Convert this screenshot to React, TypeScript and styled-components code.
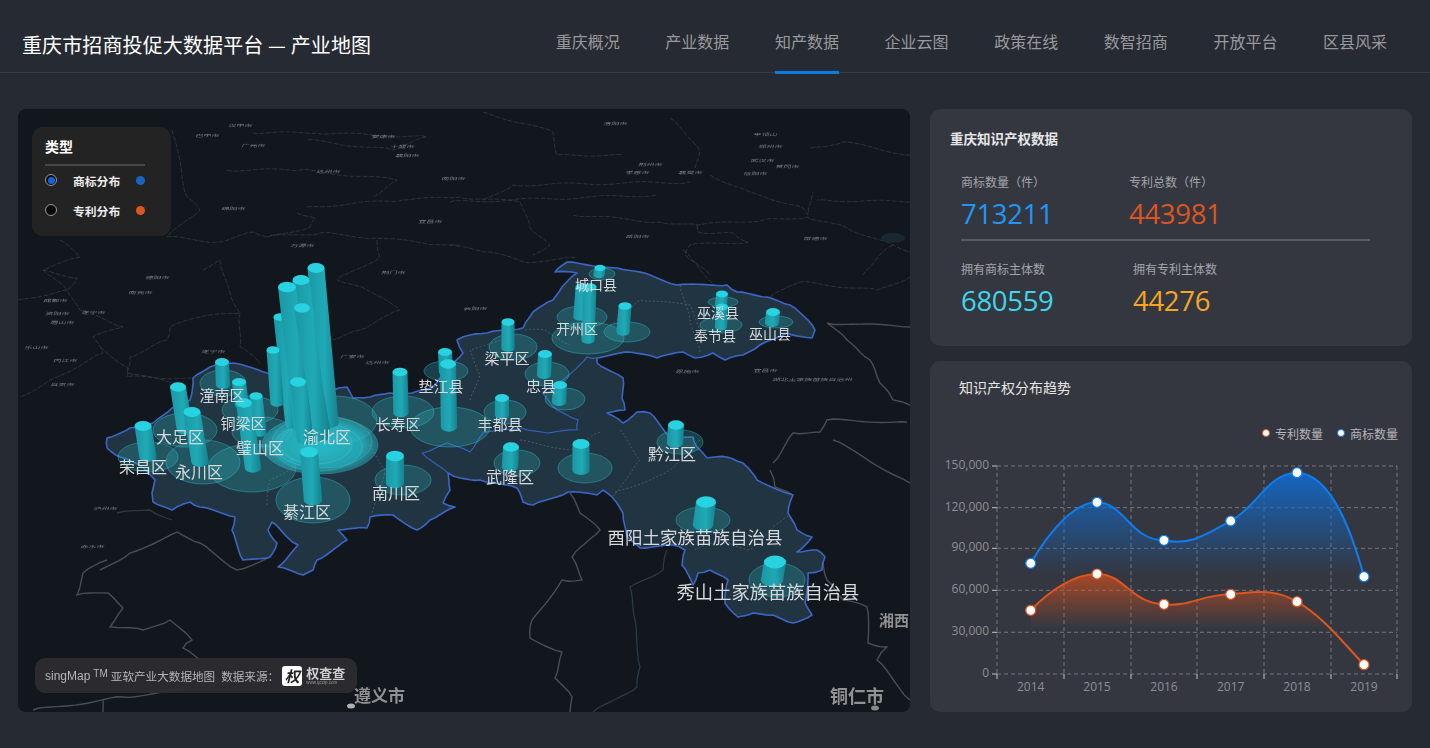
import React from "react";
import styled, { createGlobalStyle } from "styled-components";

const CJK = `"Noto Sans CJK SC", "Noto Sans", sans-serif`;

const GlobalStyle = createGlobalStyle`
  html, body {
    margin: 0;
    padding: 0;
    background: #262a32;
    font-family: ${CJK};
  }
  * { box-sizing: border-box; }
`;

const Page = styled.div`
  width: 1430px;
  height: 748px;
  overflow: hidden;
  background: #262a32;
`;

const Header = styled.header`
  height: 73px;
  padding: 0 3px 0 22px;
  display: flex;
  justify-content: space-between;
  border-bottom: 1px solid #383c46;
`;

const Title = styled.h1`
  margin: 0;
  padding-top: 31px;
  font-size: 20px;
  line-height: 28px;
  font-weight: 400;
  letter-spacing: 0.12px;
  color: #fff;
`;

const Nav = styled.nav`
  display: flex;
  gap: 45.6px;
  padding-right: 40px;
`;

const NavItem = styled.a<{ $active?: boolean }>`
  height: 74px;
  padding-top: 30px;
  font-size: 16px;
  line-height: 22px;
  color: #98999c;
  border-bottom: 3px solid ${(p) => (p.$active ? "#0a7be0" : "transparent")};
`;

const Main = styled.main`
  display: flex;
  gap: 20px;
  padding: 36px 18px 0;
`;

const MapPanel = styled.section`
  position: relative;
  width: 892px;
  height: 603px;
  border-radius: 8px;
  overflow: hidden;
  background: #12171d;
`;

const MapSvg = styled.svg`
  display: block;
  width: 892px;
  height: 603px;
`;

const FarLabels = styled.g`
  filter: blur(0.4px);
  font-family: ${CJK};
  fill: #a8adb1;
  text-anchor: middle;
`;

const CityLabel = styled.text`
  font-family: ${CJK};
  fill: #8f9193;
  font-weight: 700;
  filter: blur(0.5px);
`;

const DistrictLabel = styled.text`
  font-family: ${CJK};
  fill: #d6dadd;
  text-anchor: middle;
  dominant-baseline: central;
`;

const LegendBox = styled.div`
  position: absolute;
  left: 14px;
  top: 18px;
  width: 139px;
  height: 109px;
  padding: 10px 13px;
  border-radius: 11px;
  background: #232323;
  color: #fff;
`;

const LegendTitle = styled.div`
  font-size: 14px;
  line-height: 18px;
  font-weight: 700;
  padding-bottom: 9px;
  margin-bottom: -1px;
  width: 100px;
  border-bottom: 2px solid #474747;
`;

const LegendRow = styled.div`
  display: flex;
  align-items: center;
  width: 100px;
  height: 30px;
  font-size: 11.8px;
  font-weight: 700;
  color: #ececec;
`;

const Radio = styled.span<{ $color: string }>`
  width: 12px;
  height: 12px;
  margin-right: 16px;
  border: 1px solid #9a9a9a;
  border-radius: 50%;
  background: #0a0a0a;
  display: flex;
  align-items: center;
  justify-content: center;
  &::after {
    content: "";
    width: 7px;
    height: 7px;
    border-radius: 50%;
    background: ${(p) => p.$color};
  }
`;

const LegendDot = styled.span<{ $color: string }>`
  width: 9px;
  height: 9px;
  margin-left: auto;
  border-radius: 50%;
  background: ${(p) => p.$color};
`;

const Credit = styled.div`
  position: absolute;
  left: 17px;
  top: 549px;
  width: 322px;
  height: 35px;
  padding-left: 10px;
  display: flex;
  align-items: center;
  border-radius: 10px;
  background: rgba(44, 45, 49, 0.92);
  font-size: 11.6px;
  color: #b4b5b7;
  white-space: nowrap;
`;

const CreditBrand = styled.span`
  font-family: "Liberation Sans", sans-serif;
  font-size: 12px;
`;

const Tm = styled.sup`
  font-family: "Liberation Sans", sans-serif;
  font-size: 10px;
  line-height: 0;
  margin: 0 3px 4px 3px;
`;

const Source = styled.span`
  margin: 0 1px 0 6px;
  width: 60px;
`;

const LogoMark = styled.span`
  width: 20px;
  height: 20px;
  border-radius: 3px;
  background: #fff;
  color: #222;
  font-size: 15px;
  line-height: 20px;
  font-weight: 700;
  font-style: italic;
  text-align: center;
`;

const LogoText = styled.span`
  margin-left: 4px;
  display: flex;
  flex-direction: column;
  color: #cfcfcf;
  font-size: 13px;
  line-height: 14px;
  font-weight: 700;
  small {
    font-family: "Liberation Sans", sans-serif;
    font-size: 4.5px;
    line-height: 6px;
    font-weight: 400;
    color: #999;
  }
`;

const Side = styled.aside`
  width: 482px;
  height: 603px;
  display: flex;
  flex-direction: column;
  gap: 15px;
`;

const Card = styled.section<{ $height: number }>`
  height: ${(p) => p.$height}px;
  border-radius: 10px;
  background: #343740;
`;

const StatCard = styled(Card)`
  padding: 19px 20px 0;
`;

const StatHeading = styled.h2`
  margin: 0;
  font-size: 13.5px;
  line-height: 20px;
  font-weight: 700;
  color: #e6e6e6;
`;

const StatBody = styled.div`
  margin: 25px 22px 0 11px;
`;

const StatRow = styled.div`
  display: flex;
`;

const Stat = styled.div<{ $width?: number }>`
  width: ${(p) => (p.$width ? `${p.$width}px` : "auto")};
`;

const StatLabel = styled.div`
  font-size: 12px;
  line-height: 18px;
  color: #a4a5a8;
`;

const StatValue = styled.div<{ $color: string }>`
  margin-top: 5px;
  font-family: "Open Sans", sans-serif;
  font-size: 27.5px;
  line-height: 36px;
  letter-spacing: -0.3px;
  color: ${(p) => p.$color};
`;

const StatDivider = styled.div`
  height: 2px;
  margin: 7px 0 19px;
  background: #55585f;
`;

const TrendHeading = styled.h2`
  margin: 0;
  padding: 16px 0 0 29px;
  font-size: 14px;
  line-height: 20px;
  font-weight: 400;
  color: #e6e6e6;
`;

const TrendLegend = styled.div`
  margin: 26px 0 1px;
  padding-right: 14px;
  height: 20px;
  display: flex;
  justify-content: flex-end;
  align-items: center;
  gap: 14px;
  font-size: 12px;
  color: #b4b5b8;
`;

const TrendKey = styled.span<{ $color: string }>`
  display: flex;
  align-items: center;
  gap: 5px;
  &::before {
    content: "";
    width: 6px;
    height: 6px;
    border-radius: 50%;
    background: #fff;
    border: 1.5px solid ${(p) => p.$color};
  }
`;

const ChartSvg = styled.svg`
  display: block;
  width: 482px;
  height: 268px;
`;

const AxisText = styled.text`
  font-family: "Open Sans", "Noto Sans", sans-serif;
  font-size: 12px;
  fill: #8d8f94;
`;

type Pt = [number, number];

// roughens a hand-traced polyline so it reads like a real boundary
function jag(points: Pt[], amp = 1.1, step = 7): string {
  let seed = 1;
  const out: string[] = [];
  points.forEach((p, i) => {
    out.push(`${p[0].toFixed(1)} ${p[1].toFixed(1)}`);
    const next = points[i + 1];
    if (!next) return;
    const dx = next[0] - p[0];
    const dy = next[1] - p[1];
    const len = Math.hypot(dx, dy);
    const n = Math.floor(len / step);
    for (let k = 1; k < n; k++) {
      seed += 1;
      const off = Math.sin(seed * 12.9898 + p[0]) * amp;
      const x = p[0] + (dx * k) / n + (-dy / len) * off;
      const y = p[1] + (dy * k) / n + (dx / len) * off;
      out.push(`${x.toFixed(1)} ${y.toFixed(1)}`);
    }
  });
  return "M" + out.join(" L");
}

const chongqing: Pt[] = [
  [107, 438], [130, 428], [153, 423], [172, 408], [190, 400], [193, 378], [210, 367], [233, 363], [267, 373],
  [300, 378], [333, 390], [347, 387], [353, 398], [370, 397], [390, 393], [412, 393], [433, 387], [447, 370],
  [463, 353], [457, 340], [470, 335], [487, 333], [523, 328], [533, 312], [553, 300], [562, 287], [577, 273],
  [555, 272], [567, 262], [617, 268], [650, 275], [677, 285], [727, 285], [737, 292], [767, 297], [790, 305],
  [808, 320], [815, 330], [812, 338], [787, 333], [760, 345], [743, 355], [725, 360], [713, 353], [695, 358],
  [683, 352], [657, 358], [630, 352], [597, 358], [597, 363], [623, 378], [622, 398], [625, 410], [607, 413],
  [623, 423], [637, 412], [650, 413], [670, 437], [693, 437], [697, 447], [707, 458], [727, 457], [743, 463],
  [757, 480], [793, 495], [788, 513], [797, 530], [812, 537], [797, 552], [817, 550], [825, 557], [822, 570],
  [808, 573], [805, 603], [812, 615], [793, 623], [773, 615], [753, 613], [738, 617], [725, 603], [728, 580],
  [710, 570], [698, 573], [693, 585], [682, 565], [685, 550], [673, 545], [640, 548], [627, 537], [623, 513],
  [612, 497], [603, 490], [597, 495], [568, 492], [533, 505], [523, 502], [517, 488], [480, 480], [460, 478],
  [448, 473], [450, 490], [443, 503], [455, 507], [430, 520], [417, 530], [393, 515], [370, 517], [367, 528],
  [338, 530], [347, 540], [317, 560], [313, 570], [303, 575], [278, 567], [298, 545], [287, 537], [272, 522],
  [268, 530], [277, 543], [270, 557], [243, 560], [232, 530], [235, 517], [200, 507], [190, 502], [172, 510],
  [153, 502], [152, 493], [155, 480], [142, 467], [120, 457], [107, 448], [107, 438],
];

const innerBlue: Pt[] = [
  [422, 453], [447, 443], [470, 452], [483, 433], [522, 428], [547, 433], [577, 430], [578, 420], [557, 410],
  [543, 393], [563, 380], [587, 357], [597, 358],
];
const innerBlue2: Pt[] = [[422, 453], [448, 473]];

const dashed: Pt[][] = [
  [[267, 505], [270, 480], [290, 470], [330, 450]],
  [[370, 445], [385, 470], [372, 515]],
  [[470, 400], [480, 375], [470, 350], [505, 340]],
  [[525, 330], [545, 330], [570, 345]],
  [[610, 325], [640, 300], [690, 305], [705, 340]],
  [[680, 285], [690, 320], [700, 352]],
  [[615, 492], [650, 480], [670, 470], [700, 440]],
  [[695, 550], [720, 540], [750, 550], [775, 525], [790, 515]],
  [[520, 440], [570, 450], [600, 432]],
  [[620, 430], [640, 460], [612, 497]],
];

const farLines: Pt[][] = [
  [[167, 237], [217, 242], [253, 232], [267, 237], [320, 233], [377, 238], [423, 243], [460, 247]],
  [[297, 213], [315, 218], [310, 227], [267, 237]],
  [[307, 207], [403, 200], [460, 197], [520, 202], [530, 228], [550, 245], [533, 255]],
  [[377, 240], [380, 257], [337, 280], [367, 290], [400, 310], [360, 330], [333, 340]],
  [[203, 270], [220, 260], [230, 293], [240, 313], [200, 317], [170, 327], [167, 340], [130, 357], [127, 373], [173, 383]],
  [[240, 313], [240, 347], [260, 363]],
  [[18, 300], [67, 290], [80, 310], [123, 327], [93, 337], [103, 353], [50, 380], [20, 397]],
  [[43, 270], [77, 278], [67, 290], [43, 270]],
  [[227, 170], [300, 170], [397, 180], [373, 197]],
  [[253, 133], [317, 133], [427, 137], [393, 150], [307, 140]],
  [[172, 130], [187, 197], [200, 210], [167, 237]],
  [[60, 240], [80, 257], [43, 270]],
  [[573, 215], [660, 222], [697, 225], [763, 220], [807, 217], [847, 228], [893, 245], [910, 252]],
  [[697, 225], [698, 232], [733, 233], [748, 242], [690, 245], [685, 255], [710, 275]],
  [[710, 175], [750, 192], [803, 208], [808, 215], [813, 192]],
  [[670, 118], [693, 142], [700, 152], [695, 168]],
  [[450, 202], [657, 195]],
  [[483, 200], [513, 185], [690, 182]],
  [[450, 245], [490, 252], [523, 262], [577, 258]],
  [[810, 148], [843, 142], [910, 155]],
  [[483, 112], [553, 132], [557, 155], [623, 155]],
  [[910, 202], [817, 200]],
  [[893, 245], [877, 258], [863, 275]],
  [[770, 297], [800, 282], [877, 290], [910, 277]],
  [[683, 250], [713, 283]],
  [[100, 347], [127, 367], [127, 377], [193, 378]],
  [[40, 150], [95, 170], [60, 195], [120, 200]],
];

const nearLines: Pt[][] = [
  [[910, 327], [827, 323], [847, 340], [870, 360], [880, 383], [893, 400], [910, 405]],
  [[907, 422], [827, 420], [820, 432], [793, 433], [773, 463]],
  [[833, 440], [910, 483]],
  [[570, 493], [580, 513], [600, 530], [572, 557], [582, 580], [562, 580], [532, 620], [530, 638], [562, 652], [555, 678], [572, 697], [570, 712]],
  [[823, 560], [827, 580], [843, 600], [867, 607], [868, 643], [887, 647], [877, 660], [910, 700]],
  [[770, 470], [775, 487], [793, 495]],
  [[107, 560], [83, 573], [77, 595], [108, 593], [123, 608], [110, 627], [143, 630], [170, 620], [192, 640], [183, 648], [200, 660]],
  [[183, 690], [123, 697], [33, 710]],
  [[103, 700], [103, 712]],
  [[100, 570], [130, 553], [177, 532], [200, 543], [237, 570], [270, 557]],
];

const blueGrey: Pt[][] = [
  [[667, 550], [663, 570], [630, 587], [635, 620], [640, 667], [637, 687], [593, 712]],
  [[117, 513], [150, 510], [172, 520]],
];

const disks: [number, number, number, number][] = [
  [252, 468, 44, 24], [313, 500, 37, 23], [203, 462, 37, 22], [148, 457, 30, 15], [185, 430, 32, 17],
  [223, 383, 23, 13], [403, 480, 28, 15], [403, 412, 31, 16], [450, 427, 40, 20], [446, 371, 22, 10],
  [513, 347, 24, 13], [505, 412, 21, 12], [547, 374, 22, 12], [565, 399, 20, 11], [517, 463, 23, 13],
  [585, 468, 27, 15], [588, 338, 36, 16], [582, 317, 25, 11], [627, 332, 23, 10], [602, 274, 13, 6],
  [723, 302, 15, 5], [721, 325, 21, 8], [776, 322, 17, 6], [680, 442, 23, 12], [703, 520, 27, 13],
  [777, 580, 28, 17], [250, 410, 28, 14], [262, 432, 30, 15], [335, 420, 42, 24],
];

const rings: [number, number, number, number][] = [
  [320, 445, 58, 29], [322, 442, 50, 26], [318, 447, 44, 24], [316, 444, 36, 20],
];

// top cx, top cy, base cx, base cy, radius
const bars: [number, number, number, number, number][] = [
  [316, 268, 330, 423, 8.5],
  [301, 280, 320, 437, 8.5],
  [280, 317, 292, 425, 6.5],
  [287, 287, 303, 428, 9],
  [302, 308, 322, 430, 8],
  [273, 350, 277, 403, 6.5],
  [298, 382, 305, 440, 8],
  [222, 362, 223, 385, 7],
  [239, 382, 242, 405, 7],
  [178, 387, 185, 430, 8],
  [256, 396, 260, 433, 6.5],
  [143, 426, 148, 457, 8.5],
  [192, 412, 200, 462, 8.5],
  [244, 403, 253, 468, 8],
  [309, 452, 313, 500, 9],
  [400, 372, 401, 413, 7.5],
  [445, 352, 446, 372, 7],
  [448, 364, 449, 427, 8],
  [395, 456, 395, 483, 9],
  [508, 322, 508, 348, 6.5],
  [545, 354, 544, 375, 7],
  [560, 385, 559, 402, 7],
  [502, 398, 502, 415, 7],
  [511, 447, 510, 467, 8],
  [581, 444, 581, 470, 8.5],
  [676, 425, 675, 443, 8],
  [706, 502, 703, 525, 10],
  [775, 562, 772, 580, 11],
  [600, 268, 599, 275, 5.5],
  [582, 287, 580, 317, 6.5],
  [590, 287, 588, 340, 6.5],
  [625, 306, 623, 332, 6.5],
  [722, 294, 721, 305, 6],
  [722, 307, 721, 327, 6],
  [773, 312, 772, 323, 7],
];

const districts: [string, number, number, number][] = [
  ["荣昌区", 143, 466, 16], ["大足区", 180, 436, 16], ["永川区", 199, 471, 16], ["潼南区", 222, 394, 15],
  ["铜梁区", 243, 422, 15], ["璧山区", 260, 447, 16], ["渝北区", 327, 436, 16], ["綦江区", 307, 511, 16],
  ["南川区", 396, 492, 16], ["长寿区", 398, 423, 15], ["垫江县", 441, 385, 15], ["丰都县", 500, 423, 15],
  ["武隆区", 510, 476, 16], ["梁平区", 507, 357, 15], ["忠县", 541, 385, 15], ["开州区", 577, 328, 14],
  ["城口县", 596, 284, 14], ["巫溪县", 718, 312, 14], ["奉节县", 715, 335, 14], ["巫山县", 770, 333, 14],
  ["黔江区", 672, 453, 16], ["酉阳土家族苗族自治县", 695, 536, 17.5], ["秀山土家族苗族自治县", 768, 591, 18.3],
];

// far away names, squashed by the map perspective
const farLabels: [string, number, number][] = [
  ["巴中市", 207, 137], ["广元市", 253, 147], ["汉中市", 240, 127], ["达州市", 328, 173], ["安康市", 383, 138],
  ["十堰市", 402, 148], ["襄阳市", 407, 157], ["南阳市", 453, 180], ["绵阳市", 233, 210], ["万源市", 302, 247],
  ["宜昌市", 430, 223], ["荆门市", 393, 274], ["德阳市", 157, 279], ["南充市", 140, 294], ["成都市", 55, 302],
  ["资阳市", 57, 315], ["遂宁市", 93, 314], ["眉山市", 62, 324], ["乐山市", 36, 349], ["内江市", 65, 362],
  ["自贡市", 62, 386], ["遂宁市", 213, 353], ["广安市", 352, 358], ["达州市", 377, 364], ["云阳市", 475, 310],
  ["恩施市", 687, 373], ["宜昌市", 765, 372], ["湖北土家族苗族自治州", 812, 381], ["洛阳市", 615, 125], ["平顶山", 765, 136],
  ["郑州市", 770, 148], ["武汉市", 762, 162], ["信阳市", 755, 175], ["黄冈市", 787, 168], ["孝感市", 637, 174],
  ["荆州市", 650, 166], ["襄樊市", 690, 174], ["岳阳市", 637, 238], ["常德市", 815, 240], ["泸州市", 105, 510],
  ["赤水市", 92, 548],
];

function Bar({ bar }: { bar: [number, number, number, number, number] }) {
  const [tx, ty, bx, by, r] = bar;
  const ry = r * 0.58;
  const rb = r * 1.02;
  const body = `M${tx - r} ${ty} L${bx - rb} ${by} A${rb} ${ry} 0 0 0 ${bx + rb} ${by} L${tx + r} ${ty} Z`;
  return (
    <g>
      <path d={body} fill="url(#barBody)" />
      <ellipse cx={tx} cy={ty} rx={r} ry={ry} fill="#27d3e0" />
    </g>
  );
}

function MapCanvas() {
  return (
    <MapSvg viewBox="18 109 892 603">
      <defs>
        <linearGradient id="barBody" x1="0" x2="1" y1="0" y2="0">
          <stop offset="0" stopColor="#1a97a4" />
          <stop offset="0.55" stopColor="#20aab6" />
          <stop offset="1" stopColor="#15808e" />
        </linearGradient>
        <radialGradient id="glow">
          <stop offset="0" stopColor="#22bcc8" stopOpacity="0.95" />
          <stop offset="0.75" stopColor="#22b4c0" stopOpacity="0.8" />
          <stop offset="1" stopColor="#27b9c6" stopOpacity="0.35" />
        </radialGradient>
      </defs>

      {farLines.map((l, i) => (
        <path key={i} d={jag(l, 1.2, 5)} fill="none" stroke="#454a50" strokeWidth="0.9" strokeDasharray="5 1.5" opacity="0.6" />
      ))}
      {nearLines.map((l, i) => (
        <path key={i} d={jag(l, 1.2, 6)} fill="none" stroke="#4a4e53" strokeWidth="1.4" />
      ))}
      {blueGrey.map((l, i) => (
        <path key={i} d={jag(l, 1, 6)} fill="none" stroke="#2a3a46" strokeWidth="1.3" />
      ))}

      <ellipse cx="893" cy="238" rx="12" ry="5" fill="#1d2f3a" opacity="0.7" />

      <FarLabels>
        {farLabels.map(([t, x, y], i) => (
          <text key={i} transform={`translate(${x} ${y}) skewX(-18) scale(1 0.5)`} fontSize="8" opacity="0.7">
            {t}
          </text>
        ))}
      </FarLabels>
      <CityLabel x="354" y="702" fontSize="17">遵义市</CityLabel>
      <CityLabel x="830" y="703" fontSize="18">铜仁市</CityLabel>
      <CityLabel x="879" y="626" fontSize="15">湘西</CityLabel>
      <ellipse cx="351" cy="706" rx="4" ry="2.5" fill="#b0b0b0" />
      <ellipse cx="875" cy="708" rx="4" ry="2.5" fill="#888" />

      <path d={jag(chongqing, 0.9, 5) + " Z"} fill="#213442" stroke="#3c66c4" strokeWidth="1.6" strokeLinejoin="round" />
      <path d={jag(innerBlue, 0.8, 5)} fill="none" stroke="#3460bb" strokeWidth="1.2" />
      <path d={jag(innerBlue2, 0.8, 5)} fill="none" stroke="#3460bb" strokeWidth="1.2" />
      {dashed.map((l, i) => (
        <path key={i} d={jag(l, 0.8, 5)} fill="none" stroke="#52626e" strokeWidth="0.8" strokeDasharray="2 2" />
      ))}

      {disks.map(([cx, cy, rx, ry], i) => (
        <ellipse key={i} cx={cx} cy={cy} rx={rx} ry={ry} fill="#2ab4bf" fillOpacity="0.26" stroke="#2ec3cf" strokeOpacity="0.42" />
      ))}
      <ellipse cx="320" cy="445" rx="58" ry="29" fill="url(#glow)" />
      {rings.map(([cx, cy, rx, ry], i) => (
        <ellipse key={i} cx={cx} cy={cy} rx={rx} ry={ry} fill="#3bd8e4" fillOpacity="0.05" stroke="#5fe6ef" strokeOpacity="0.22" />
      ))}

      {bars.map((b, i) => (
        <Bar key={i} bar={b} />
      ))}

      {districts.map(([t, x, y, s]) => (
        <DistrictLabel key={t} x={x} y={y} fontSize={s}>
          {t}
        </DistrictLabel>
      ))}
    </MapSvg>
  );
}

const gridX = [997, 1064, 1131, 1197, 1264, 1331, 1397];
const gridY = [466, 507.7, 548.3, 590.3, 632.3, 674];
const yNames = ["150,000", "120,000", "90,000", "60,000", "30,000", "0"];
const years = [2014, 2015, 2016, 2017, 2018, 2019];
const pointX = [1030.7, 1097, 1164, 1230.7, 1297, 1364];
const blueY = [563.3, 502.3, 540.3, 521, 472.7, 576.7];
const orangeY = [610.3, 574, 604.3, 594.3, 601.7, 664.7];

const blueLine =
  "M1030.7 563.3 C1050 530 1075 502 1097 502.3 C1125 503 1130 540 1164 540.3 C1190 546 1205 535 1230.7 521 C1258 506 1268 473 1297 472.7 C1328 473 1350 525 1364 576.7";
const orangeLine =
  "M1030.7 610.3 C1050 590 1075 574 1097 574 C1125 574 1130 603 1164 604.3 C1190 607 1200 595 1230.7 594.3 C1250 593 1272 587 1297 601.7 C1325 618 1345 645 1364 664.7";

function TrendChart() {
  return (
    <ChartSvg viewBox="930 444 482 268">
      <defs>
        <linearGradient id="blueArea" gradientUnits="userSpaceOnUse" x1="0" x2="0" y1="472" y2="575">
          <stop offset="0" stopColor="#1268c8" stopOpacity="0.95" />
          <stop offset="1" stopColor="#1268c8" stopOpacity="0" />
        </linearGradient>
        <linearGradient id="orangeArea" gradientUnits="userSpaceOnUse" x1="0" x2="0" y1="574" y2="628">
          <stop offset="0" stopColor="#d9501c" stopOpacity="0.7" />
          <stop offset="1" stopColor="#d9501c" stopOpacity="0" />
        </linearGradient>
      </defs>

      {gridY.map((y, i) => (
        <g key={y}>
          <line x1="997" x2="1397" y1={y} y2={y} stroke="#7b7d83" strokeWidth="0.9" strokeDasharray="4 3" />
          <line x1="992" x2="997" y1={y} y2={y} stroke="#c4c5c8" />
          <AxisText x="989" y={y + 3} textAnchor="end">
            {yNames[i]}
          </AxisText>
        </g>
      ))}
      {gridX.map((x) => (
        <g key={x}>
          <line x1={x} x2={x} y1="466" y2="674" stroke="#7b7d83" strokeWidth="0.9" strokeDasharray="4 3" />
          <line x1={x} x2={x} y1="674" y2="679" stroke="#c4c5c8" />
        </g>
      ))}
      {years.map((y, i) => (
        <AxisText key={y} x={pointX[i]} y="691" textAnchor="middle">
          {y}
        </AxisText>
      ))}

      <path d={`${blueLine} L1364 674 L1030.7 674 Z`} fill="url(#blueArea)" />
      <path d={`${orangeLine} L1364 674 L1030.7 674 Z`} fill="url(#orangeArea)" />
      <path d={blueLine} fill="none" stroke="#0f7bec" strokeWidth="2" />
      <path d={orangeLine} fill="none" stroke="#dd5520" strokeWidth="2" />
      {pointX.map((x, i) => (
        <circle key={x} cx={x} cy={blueY[i]} r="5" fill="#fff" stroke="#0f7bec" strokeWidth="1.2" />
      ))}
      {pointX.map((x, i) => (
        <circle key={x} cx={x} cy={orangeY[i]} r="5" fill="#fff" stroke="#dd5520" strokeWidth="1.2" />
      ))}
    </ChartSvg>
  );
}

const navItems = ["重庆概况", "产业数据", "知产数据", "企业云图", "政策在线", "数智招商", "开放平台", "区县风采"];

export default function App() {
  return (
    <Page>
      <GlobalStyle />
      <Header>
        <Title>重庆市招商投促大数据平台 — 产业地图</Title>
        <Nav>
          {navItems.map((n) => (
            <NavItem key={n} $active={n === "知产数据"}>
              {n}
            </NavItem>
          ))}
        </Nav>
      </Header>
      <Main>
        <MapPanel>
          <MapCanvas />
          <LegendBox>
            <LegendTitle>类型</LegendTitle>
            <LegendRow>
              <Radio $color="#0f62e0" />
              商标分布
              <LegendDot $color="#1565c0" />
            </LegendRow>
            <LegendRow>
              <Radio $color="#0a0a0a" />
              专利分布
              <LegendDot $color="#dd5520" />
            </LegendRow>
          </LegendBox>
          <Credit>
            <CreditBrand>singMap</CreditBrand>
            <Tm>TM</Tm>
            亚软产业大数据地图
            <Source>数据来源：</Source>
            <LogoMark>权</LogoMark>
            <LogoText>
              权查查
              <small>www.qccip.com</small>
            </LogoText>
          </Credit>
        </MapPanel>
        <Side>
          <StatCard $height={237}>
            <StatHeading>重庆知识产权数据</StatHeading>
            <StatBody>
              <StatRow>
                <Stat $width={168}>
                  <StatLabel>商标数量（件）</StatLabel>
                  <StatValue $color="#2196f3">713211</StatValue>
                </Stat>
                <Stat>
                  <StatLabel>专利总数（件）</StatLabel>
                  <StatValue $color="#dd5520">443981</StatValue>
                </Stat>
              </StatRow>
              <StatDivider />
              <StatRow>
                <Stat $width={172}>
                  <StatLabel>拥有商标主体数</StatLabel>
                  <StatValue $color="#3fd6ea">680559</StatValue>
                </Stat>
                <Stat>
                  <StatLabel>拥有专利主体数</StatLabel>
                  <StatValue $color="#f5a623">44276</StatValue>
                </Stat>
              </StatRow>
            </StatBody>
          </StatCard>
          <Card $height={351}>
            <TrendHeading>知识产权分布趋势</TrendHeading>
            <TrendLegend>
              <TrendKey $color="#dd5520">专利数量</TrendKey>
              <TrendKey $color="#0f7bec">商标数量</TrendKey>
            </TrendLegend>
            <TrendChart />
          </Card>
        </Side>
      </Main>
    </Page>
  );
}
